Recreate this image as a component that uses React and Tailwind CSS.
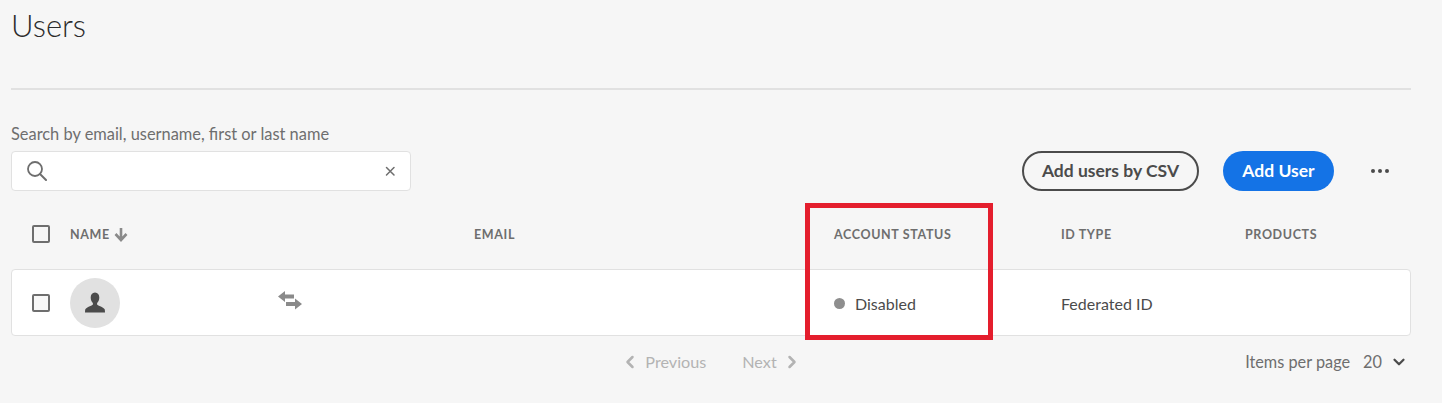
import React from 'react';
import { ChevronDown, ChevronLeft, ChevronRight } from 'lucide-react';

const COLUMNS = 'grid grid-cols-[59px_404px_360px_227px_184px_1fr] items-center';

const Checkbox = ({ className = '' }) => (
  <div className="pl-[21px]">
    <div className={`w-[18px] h-[18px] rounded-[2px] border-2 border-[#6e6e6e] ${className}`}></div>
  </div>
);

const HeaderCell = ({ children }) => (
  <div className="pt-[2px] text-[12.5px] leading-4 font-bold tracking-[0.05em] text-[#6e6e6e]">{children}</div>
);

const App = () => {
  return (
    <div className="relative w-[1442px] h-[403px] overflow-hidden bg-[#f6f6f6] font-['Lato','Open_Sans',sans-serif] text-[#4b4b4b]">
      <div className="pl-[11px] pr-[31px]">
        {/* Title */}
        <div className="h-[90px] border-b-2 border-[#e1e1e1]">
          <h1 className="text-[31px] leading-[50px] font-light text-[#2c2c2c]">Users</h1>
        </div>

        {/* Search and actions */}
        <div className="flex items-end justify-between h-[101px]">
          <div className="w-[400px]">
            <label className="block text-[16.4px] leading-5 text-[#6e6e6e] mb-[7px]">Search by email, username, first or last name</label>
            <div className="flex items-center justify-between h-10 pl-[15px] pr-[12px] bg-white border border-[#e1e1e1] rounded-[4px]">
              <svg width="20" height="20" viewBox="0 0 20 20" className="text-[#6e6e6e]">
                <circle cx="8" cy="8" r="7" fill="none" stroke="currentColor" strokeWidth="1.8" />
                <path d="M13 13l6 6" fill="none" stroke="currentColor" strokeWidth="2" strokeLinecap="round" />
              </svg>
              <svg width="15" height="15" viewBox="0 0 15 15" className="text-[#6e6e6e]">
                <path d="M3.500 3.500l7.500 7.500M11 3.500l-7.500 7.500" fill="none" stroke="currentColor" strokeWidth="1.500" strokeLinecap="round" />
              </svg>
            </div>
          </div>
          <div className="flex items-center h-10">
            <button className="w-[177px] h-10 rounded-full border-2 border-[#4b4b4b] text-[17.5px] font-bold text-[#4b4b4b]">Add users by CSV</button>
            <button className="w-[111px] h-10 ml-6 rounded-full bg-[#1473e6] text-[17.5px] font-bold text-white">Add User</button>
            <div className="flex items-center gap-[3px] ml-[37px] mr-[22px]">
              <span className="w-[4px] h-[4px] rounded-full bg-[#4b4b4b]"></span>
              <span className="w-[4px] h-[4px] rounded-full bg-[#4b4b4b]"></span>
              <span className="w-[4px] h-[4px] rounded-full bg-[#4b4b4b]"></span>
            </div>
          </div>
        </div>

        {/* Table header */}
        <div className={`${COLUMNS} h-[78px] pt-2`}>
          <Checkbox />
          <div className="flex items-center gap-[4px]">
            <HeaderCell>NAME</HeaderCell>
            <svg width="14" height="15" viewBox="0 0 14 15" className="text-[#8a8a8a]">
              <path d="M7 1v11.500M1.500 7l5.500 6 5.500-6" fill="none" stroke="currentColor" strokeWidth="2.600" />
            </svg>
          </div>
          <HeaderCell>EMAIL</HeaderCell>
          <HeaderCell>ACCOUNT STATUS</HeaderCell>
          <HeaderCell>ID TYPE</HeaderCell>
          <HeaderCell>PRODUCTS</HeaderCell>
        </div>

        {/* User row */}
        <div className={`${COLUMNS} h-[67px] bg-white border border-[#e1e1e1] rounded-[4px]`}>
          <Checkbox className="bg-[#f8f8f8] -ml-px" />
          <div className="flex items-center -ml-px">
            <div className="flex items-center justify-center w-[50px] h-[50px] rounded-full bg-[#e1e1e1]">
              <svg width="20" height="21" viewBox="0 0 20 21" className="text-[#4b4b4b]">
                <path d="M10 0.500c2.800 0 4.300 2.200 4.300 5 0 2.300-.9 4.300-2.200 5.400v1.600c0 .8 5.600 2.300 7.400 4.500.4.500.5 2.400.5 3.500H0c0-1.100.1-3 .5-3.500 1.800-2.200 7.400-3.700 7.400-4.500v-1.600C6.600 9.800 5.700 7.800 5.700 5.500c0-2.800 1.500-5 4.300-5z" fill="currentColor" />
              </svg>
            </div>
            <svg width="24" height="20" viewBox="0 0 24 20" className="ml-[158px] -mt-[4px] text-[#8a8a8a]">
              <path d="M0 5.500L7 0v3.500h9v4H7V11zM24 13l-7-5.500v3.500H8v4h9v3.500z" fill="currentColor" />
            </svg>
          </div>
          <div></div>
          <div className="flex items-center -ml-px pt-[2px] text-[16px]">
            <span className="w-[11px] h-[11px] rounded-full bg-[#8e8e8e] mr-[10px]"></span>
            Disabled
          </div>
          <div className="-ml-px pt-[2px] text-[16px]">Federated ID</div>
          <div></div>
        </div>

        {/* Pagination */}
        <div className="grid grid-cols-[1fr_auto_1fr] items-center h-[52px] text-[16.2px]">
          <div></div>
          <div className="flex items-center text-[#b3b3b3]">
            <ChevronLeft size={20} strokeWidth={3} className="mr-[5px]" />
            <span>Previous</span>
            <span className="ml-[36px]">Next</span>
            <ChevronRight size={20} strokeWidth={3} className="ml-[5px]" />
          </div>
          <div className="flex items-center justify-end text-[#6e6e6e] text-[16.3px] pr-[3px]">
            <span>Items per page</span>
            <span className="ml-[13px]">20</span>
            <ChevronDown size={18} strokeWidth={3} className="ml-[8px] text-[#4b4b4b]" />
          </div>
        </div>
      </div>

      {/* Annotation box */}
      <div className="absolute left-[805px] top-[203px] w-[188px] h-[137px] border-[5px] border-[#e41e2d]"></div>
    </div>
  );
};

export default App;
